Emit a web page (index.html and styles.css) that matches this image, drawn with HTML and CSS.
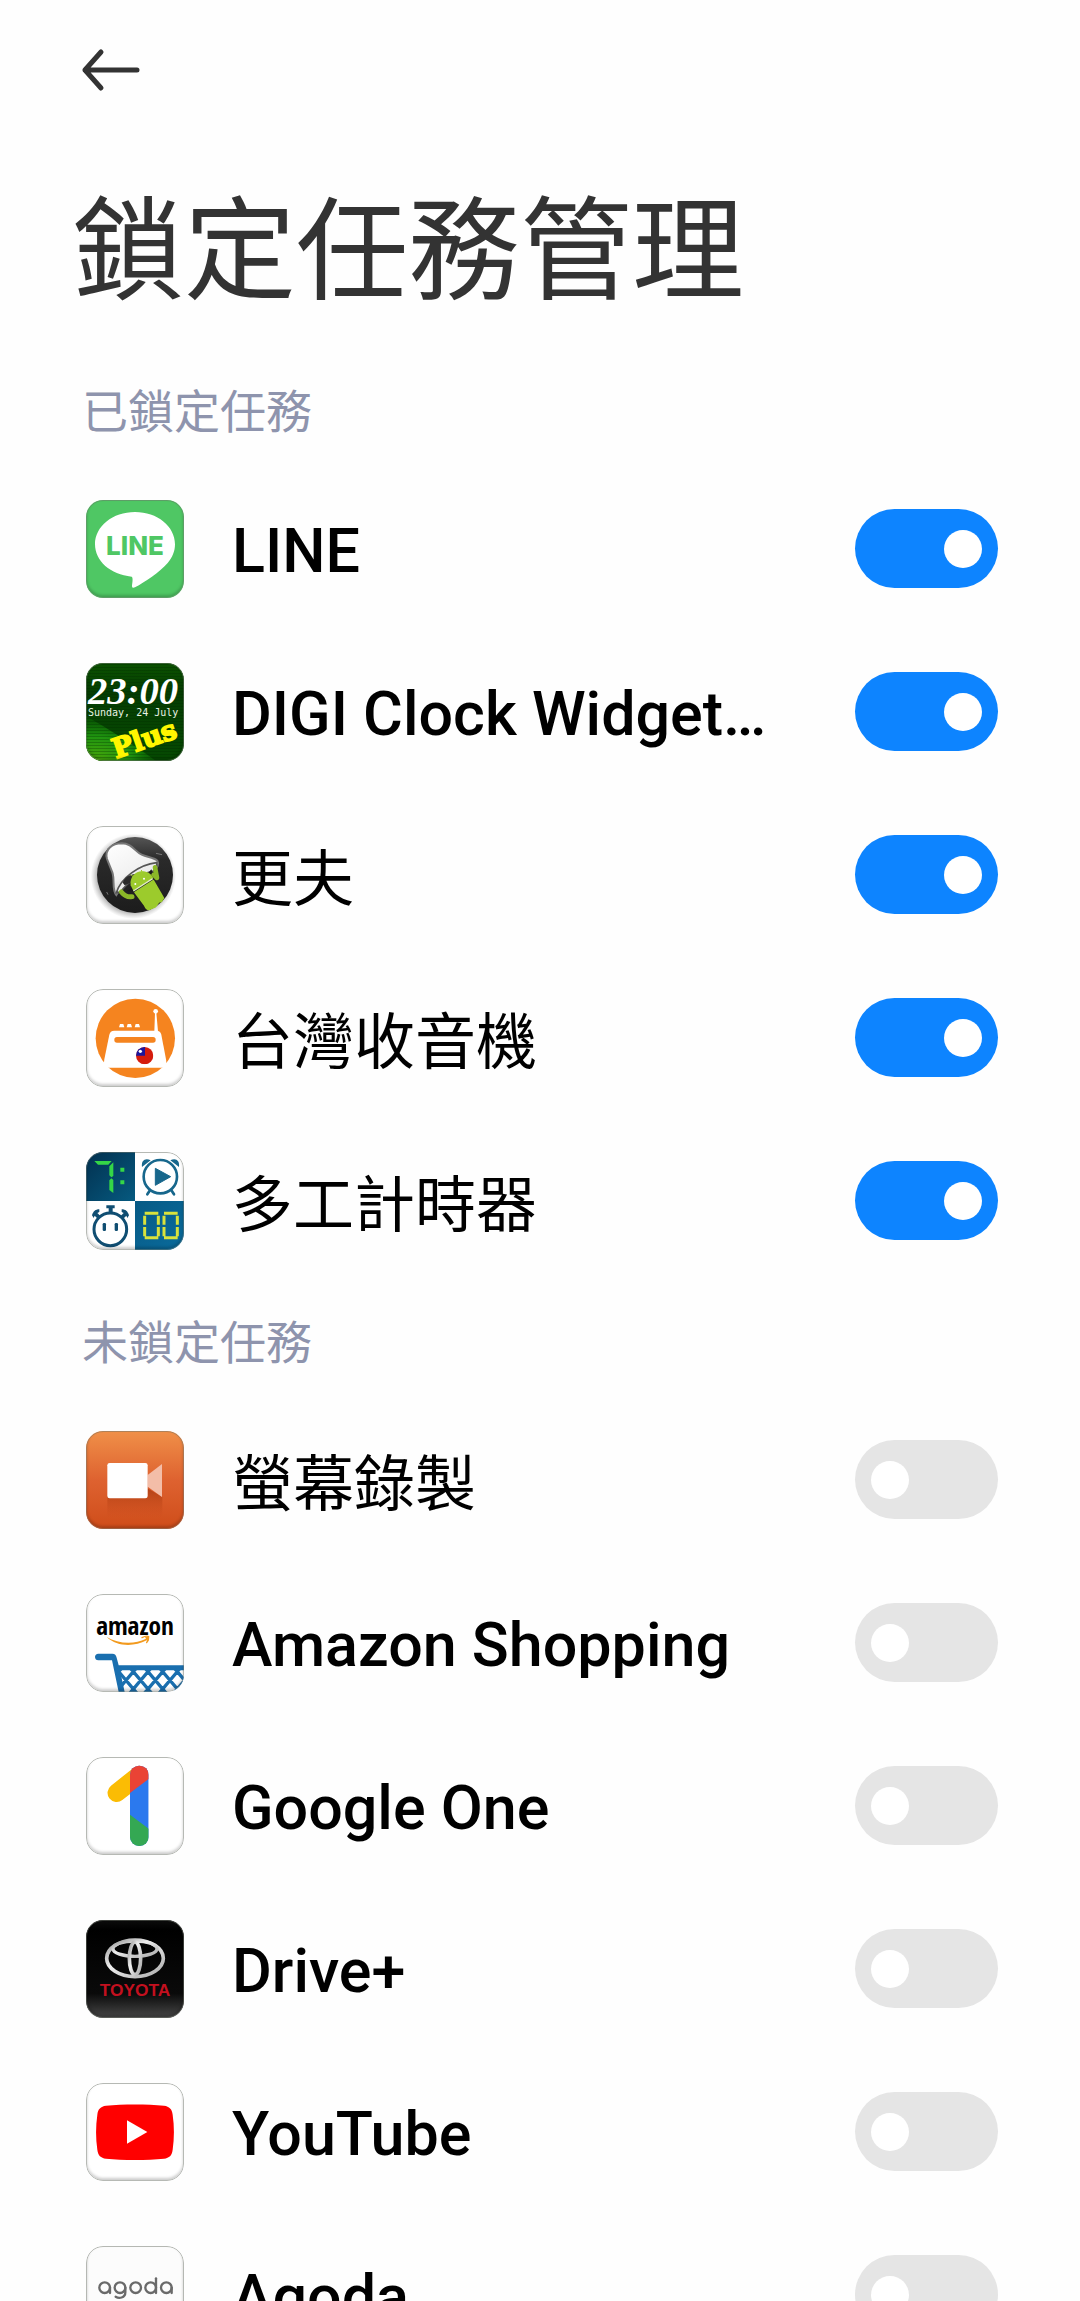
FILE: index.html
```html
<!DOCTYPE html>
<html lang="zh-Hant">
<head>
<meta charset="utf-8">
<meta name="viewport" content="width=device-width, initial-scale=1">
<title>鎖定任務管理</title>
<link rel="stylesheet" href="styles.css">
</head>
<body>
<div class="screen">
  <header class="header">
    <button class="back" type="button" aria-label="返回">
      <svg width="60" height="44" viewBox="0 0 60 44" fill="none" stroke="#333" stroke-width="5" stroke-linecap="round" stroke-linejoin="round"><path d="M57 22H5M21 4 5 22l16 18"/></svg>
    </button>
    <h1 class="title">鎖定任務管理</h1>
  </header>

  <main>
    <section>
      <h2 class="section-title">已鎖定任務</h2>
      <ul class="list">
        <li class="row">
          <span class="icon">
            <svg viewBox="48 57 294 294" aria-hidden="true">
              <rect x="48" y="57" width="294" height="294" fill="#4fc764"/>
              <path d="M195 93C128 93 75 136 75 190c0 50 46 91 110 97 5 3 2 18 1 28 0 5 3 7 9 4 30-16 73-45 98-73 15-18 22-36 22-56 0-54-53-97-120-97z" fill="#fff"/>
              <text x="195" y="221" class="logo-line" text-anchor="middle" fill="#4fc764">LINE</text>
            </svg>
          </span>
          <label class="label" for="t-line">LINE</label>
          <input class="switch" id="t-line" type="checkbox" role="switch" checked>
        </li>
        <li class="row">
          <span class="icon">
            <svg viewBox="48 546 294 294" aria-hidden="true">
              <defs>
                <linearGradient id="digi-bg" x1="0" y1="0" x2="0" y2="1"><stop offset="0" stop-color="#0b5200"/><stop offset=".3" stop-color="#053d02"/><stop offset="1" stop-color="#064a02"/></linearGradient>
                <radialGradient id="digi-glow" cx=".1" cy="1" r="1"><stop offset="0" stop-color="#4aa80a"/><stop offset=".55" stop-color="#1f9410"/><stop offset="1" stop-color="#0a6a02" stop-opacity=".3"/></radialGradient>
                <pattern id="digi-lines" width="8" height="9" patternUnits="userSpaceOnUse"><path d="M0 1h8" stroke="#002800" stroke-opacity=".35" stroke-width="3"/></pattern>
              </defs>
              <rect x="48" y="546" width="294" height="294" fill="url(#digi-bg)"/>
              <path d="M48 705c60 35 150 90 210 135H48z" fill="url(#digi-glow)"/>
              <rect x="48" y="546" width="294" height="294" fill="url(#digi-lines)"/>
              <text x="54" y="669" class="digi-time" fill="#fff">23:00</text>
              <text x="54" y="704" class="digi-date" fill="#e8f4e4">Sunday, 24 July</text>
              <text x="0" y="0" class="digi-plus" fill="#fff600" stroke="#fff600" stroke-width="5" transform="translate(138 833) rotate(-19)">Plus</text>
            </svg>
          </span>
          <label class="label" for="t-digi">DIGI Clock Widget…</label>
          <input class="switch" id="t-digi" type="checkbox" role="switch" checked>
        </li>
        <li class="row">
          <span class="icon">
            <svg viewBox="48 74 294 294" aria-hidden="true">
              <defs>
                <linearGradient id="bell-disc" x1="0" y1="0" x2="0" y2="1"><stop offset="0" stop-color="#555"/><stop offset=".3" stop-color="#2a2a2a"/><stop offset="1" stop-color="#1c1c1c"/></linearGradient>
                <linearGradient id="bell-body" x1="0" y1="0" x2=".6" y2="1"><stop offset="0" stop-color="#fff"/><stop offset=".6" stop-color="#f2f2f2"/><stop offset="1" stop-color="#bbb"/></linearGradient>
                <radialGradient id="bell-shade"><stop offset=".8" stop-color="#777" stop-opacity=".7"/><stop offset="1" stop-color="#999" stop-opacity="0"/></radialGradient>
              </defs>
              <rect x="48" y="74" width="294" height="294" fill="#fff"/>
              <circle cx="190" cy="225" r="128" fill="url(#bell-shade)"/>
              <circle cx="195" cy="221" r="114" fill="url(#bell-disc)"/>
              <path d="M139 281c-14-16-4-44-12-68l-16-40c-8-30 16-46 44-47 32 0 40 26 60 34 18 8 36 8 47 18 6 10 0 22-10 30-50 6-90 34-113 73z" fill="url(#bell-body)" stroke="#777" stroke-width="6"/>
              <path d="M139 274c14-44 68-84 121-90 2 12-4 22-12 26-38 8-76 32-96 62z" fill="#ededed" stroke="#555" stroke-width="5"/>
              <path d="M158 244c6-16 20-24 38-26l-4 22-28 12z" fill="#2b2b2b"/>
              <path d="M170 270l16-10 6 10zM232 218l12-14 6 14z" fill="#1c1c1c"/>
              <g fill="#9ccb2c">
                <path d="M182 252c-4-24 14-42 34-42 16 0 28 8 34 20l-60 38z"/>
                <path d="M195 273l55-35 30 52-6 10-8 2-10 14-18 8c-8 0-10-4-14-12z" stroke="#9ccb2c" stroke-width="5" stroke-linejoin="round"/>
                <path d="M255 198l6 32-10-10" fill="none" stroke="#8bb828" stroke-width="14" stroke-linecap="round" stroke-linejoin="round"/>
                <path d="M154 272c10 12 22 16 32 14" fill="none" stroke="#8bb828" stroke-width="15" stroke-linecap="round"/>
                <path d="M192 228l-10-8M218 220l-4-14" stroke="#9ccb2c" stroke-width="3"/>
              </g>
              <path d="M190 269l58-37" stroke="#e4f2c4" stroke-width="4"/>
              <circle cx="196" cy="248" r="3" fill="#fff"/><circle cx="222" cy="232" r="3" fill="#fff"/>
              <path d="M258 156l18 4M110 272l4 8" stroke="#777" stroke-width="3"/>
            </svg>
          </span>
          <label class="label label-cjk" for="t-gengfu">更夫</label>
          <input class="switch" id="t-gengfu" type="checkbox" role="switch" checked>
        </li>
        <li class="row">
          <span class="icon">
            <svg viewBox="48 563 294 294" aria-hidden="true">
              <defs><clipPath id="flag"><circle cx="224" cy="763" r="26"/></clipPath></defs>
              <rect x="48" y="563" width="294" height="294" fill="#fff"/>
              <circle cx="196" cy="711" r="119" fill="#f5841f"/>
              <path d="M133 688h126c9 0 13 4 15 12l14 74c3 16-2 25-14 25H116c-12 0-16-8-13-25l15-74c2-8 6-12 15-12z" fill="#fff"/>
              <rect x="133" y="707" width="124" height="17" rx="8" fill="#f5841f"/>
              <path d="M147 678l3-10h10l3 10zM170 678l3-10h10l3 10zM194 678l3-10h10l3 10zM253 690l2-56h4l5 56z" fill="#fff"/>
              <circle cx="257" cy="630" r="7" fill="#fff"/>
              <g clip-path="url(#flag)"><path d="M198 737h52v52h-52z" fill="#d51c0c"/><path d="M198 737h27v26h-27z" fill="#1c169c"/></g>
              <circle cx="211" cy="750" r="5" fill="#fff"/>
            </svg>
          </span>
          <label class="label label-cjk" for="t-radio">台灣收音機</label>
          <input class="switch" id="t-radio" type="checkbox" role="switch" checked>
        </li>
        <li class="row">
          <span class="icon">
            <svg viewBox="48 63 294 294" aria-hidden="true">
              <defs>
                <linearGradient id="multi-a" x1="0" y1="0" x2="1" y2="1"><stop offset="0" stop-color="#02304f"/><stop offset="1" stop-color="#065a80"/></linearGradient>
                <linearGradient id="multi-b" x1="0" y1="0" x2="1" y2="1"><stop offset="0" stop-color="#075a85"/><stop offset="1" stop-color="#0a6b9c"/></linearGradient>
              </defs>
              <rect x="48" y="63" width="294" height="294" fill="#fff"/>
              <rect x="48" y="63" width="147" height="147" fill="url(#multi-a)"/>
              <rect x="195" y="210" width="147" height="147" fill="url(#multi-b)"/>
              <path d="M73 90h52l-10 11H84zM130 94v41l-6 4-6-6v-27zM124 142l6 5v39l-12-9v-29zM151 110h12v12h-12zM151 148h12v12h-12z" fill="#35d647"/>
              <g fill="none" stroke="#17678c" stroke-width="8" stroke-linecap="round">
                <circle cx="271" cy="137" r="50"/>
                <path d="M239 179l-7 11M305 179l7 11"/>
              </g>
              <path d="M256 112l46 25-46 26z" fill="#17678c" stroke="#17678c" stroke-width="3" stroke-linejoin="round"/>
              <path d="M216 108c-3-20 10-28 26-20zM327 108c3-20-10-28-26-20z" fill="#17678c"/>
              <circle cx="121" cy="295" r="49" fill="none" stroke="#104e72" stroke-width="9"/>
              <path d="M109 223h25v9h-6v16h-12v-16h-7zM66 253c4-12 10-18 22-18v8l-6 3 10 10-8 8-10-10-3 7zM177 253c-4-12-10-18-22-18v8l6 3-10 10 8 8 10-10 3 7z" fill="#104e72"/>
              <rect x="98" y="276" width="10" height="24" rx="4" fill="#104e72"/>
              <rect x="134" y="276" width="10" height="24" rx="4" fill="#104e72"/>
              <path d="M224 247h41M224 320h41M224 254v27M224 288v28M265 254v27M265 288v28M282 247h41M282 320h41M282 254v27M282 288v28M322 254v27M322 288v28" fill="none" stroke="#d9e23c" stroke-width="9"/>
            </svg>
          </span>
          <label class="label label-cjk" for="t-multi">多工計時器</label>
          <input class="switch" id="t-multi" type="checkbox" role="switch" checked>
        </li>
      </ul>
    </section>

    <section>
      <h2 class="section-title">未鎖定任務</h2>
      <ul class="list">
        <li class="row">
          <span class="icon">
            <svg viewBox="48 59 294 294" aria-hidden="true">
              <defs>
                <linearGradient id="rec-bg" x1="0" y1="0" x2="0" y2="1"><stop offset="0" stop-color="#f09048"/><stop offset=".5" stop-color="#de6230"/><stop offset="1" stop-color="#cf4d1a"/></linearGradient>
                <linearGradient id="rec-shade" x1="0" y1="0" x2="0" y2="1"><stop offset="0" stop-color="#a83a10" stop-opacity=".8"/><stop offset="1" stop-color="#c84a1a" stop-opacity="0"/></linearGradient>
              </defs>
              <rect x="48" y="59" width="294" height="294" fill="url(#rec-bg)"/>
              <path d="M112 255h120v-24l45 26v65H112z" fill="url(#rec-shade)"/>
              <path d="M233 191l43-33v99l-43-31z" fill="#f3bda8"/>
              <rect x="112" y="155" width="121" height="106" rx="7" fill="#fff"/>
            </svg>
          </span>
          <label class="label label-cjk" for="t-rec">螢幕錄製</label>
          <input class="switch" id="t-rec" type="checkbox" role="switch">
        </li>
        <li class="row">
          <span class="icon">
            <svg viewBox="48 549 294 294" aria-hidden="true">
              <defs><clipPath id="basket"><path d="M140 765h202v78H154z"/></clipPath></defs>
              <rect x="48" y="549" width="294" height="294" fill="#fff"/>
              <text x="195" y="671" class="logo-amazon" text-anchor="middle" fill="#000">amazon</text>
              <path d="M110 678c34 20 82 24 118 5l-3-4 12-3-3 18-4-6c-38 20-88 20-120-10z" fill="#f29a1e"/>
              <path d="M216 680c10-5 17-5 20-3 1 5-1 11-6 18" fill="none" stroke="#f29a1e" stroke-width="4" stroke-linecap="round"/>
              <path d="M75 738c0-6 4-10 10-10h42c8 0 11 4 13 12l6 23h196v15H150l14 65h-18l-20-95H85c-6 0-10-4-10-10z" fill="#1a6faf"/>
              <path clip-path="url(#basket)" fill="none" stroke="#1a6faf" stroke-width="10" d="M80 756l88 104M124 756l88 104M168 756l88 104M212 756l88 104M256 756l88 104M300 756l88 104M168 756l-88 104M212 756l-88 104M256 756l-88 104M300 756l-88 104M344 756l-88 104M388 756l-88 104"/>
            </svg>
          </span>
          <label class="label" for="t-amazon">Amazon Shopping</label>
          <input class="switch" id="t-amazon" type="checkbox" role="switch">
        </li>
        <li class="row">
          <span class="icon">
            <svg viewBox="48 48 294 294" aria-hidden="true">
              <defs>
                <clipPath id="one-stem"><rect x="180" y="74" width="56" height="241" rx="27"/></clipPath>
              </defs>
              <rect x="48" y="48" width="294" height="294" fill="#fff"/>
              <path d="M189 82 123 134a27 27 0 0 0 34 43l40-31z" fill="#fbbc04"/>
              <g clip-path="url(#one-stem)">
                <path d="M180 70h56v250h-56z" fill="#2b79ee"/>
                <path d="M180 70h56v44l-56 42z" fill="#ea4335"/>
                <path d="M180 221l56 42v57h-56z" fill="#34a853"/>
              </g>
            </svg>
          </span>
          <label class="label" for="t-one">Google One</label>
          <input class="switch" id="t-one" type="checkbox" role="switch">
        </li>
        <li class="row">
          <span class="icon">
            <svg viewBox="48 537 294 294" aria-hidden="true">
              <defs>
                <linearGradient id="toy-bg" x1="0" y1="0" x2="0" y2="1"><stop offset="0" stop-color="#0c0c0c"/><stop offset=".1" stop-color="#000"/><stop offset=".75" stop-color="#0a0a0a"/><stop offset="1" stop-color="#484848"/></linearGradient>
                <linearGradient id="toy-ring" x1="0" y1="0" x2="1" y2="1"><stop offset="0" stop-color="#999"/><stop offset=".4" stop-color="#eee"/><stop offset="1" stop-color="#aaa"/></linearGradient>
              </defs>
              <rect x="48" y="537" width="294" height="294" fill="url(#toy-bg)"/>
              <g fill="none" stroke="url(#toy-ring)">
                <ellipse cx="195" cy="652" rx="85" ry="55" stroke-width="11"/>
                <ellipse cx="195" cy="623" rx="66" ry="23" stroke-width="10"/>
                <ellipse cx="195" cy="652" rx="17" ry="49" stroke-width="11"/>
              </g>
              <text x="195" y="766" class="logo-toyota" text-anchor="middle" fill="#c3101f">TOYOTA</text>
            </svg>
          </span>
          <label class="label" for="t-drive">Drive+</label>
          <input class="switch" id="t-drive" type="checkbox" role="switch">
        </li>
        <li class="row">
          <span class="icon">
            <svg viewBox="48 66 294 294" aria-hidden="true">
              <rect x="48" y="66" width="294" height="294" fill="#fff"/>
              <path d="M108 134c50-5 124-5 174 0 16 2 24 10 26 27 5 34 5 71 0 105-2 17-10 25-26 27-50 5-124 5-174 0-16-2-24-10-26-27-5-34-5-71 0-105 2-17 10-25 26-27z" fill="#f00"/>
              <path d="M171 178l61 35-61 35z" fill="#fff"/>
            </svg>
          </span>
          <label class="label" for="t-youtube">YouTube</label>
          <input class="switch" id="t-youtube" type="checkbox" role="switch">
        </li>
        <li class="row">
          <span class="icon">
            <svg viewBox="48 555 294 294" aria-hidden="true">
              <rect x="48" y="555" width="294" height="294" fill="#fcfcfc"/>
              <g fill="none" stroke="#6a6a6a" stroke-width="7" stroke-linecap="round">
                <circle cx="104" cy="680" r="16"/><path d="M120 680v16"/>
                <circle cx="150" cy="680" r="16"/><path d="M166 680v14c0 18-20 19-29 13"/>
                <circle cx="197" cy="680" r="16"/>
                <circle cx="242" cy="680" r="16"/><path d="M258 696v-44"/>
                <circle cx="289" cy="680" r="16"/><path d="M305 680v16"/>
              </g>
            </svg>
          </span>
          <label class="label" for="t-agoda">Agoda</label>
          <input class="switch" id="t-agoda" type="checkbox" role="switch">
        </li>
      </ul>
    </section>
  </main>
</div>
</body>
</html>
```
FILE: styles.css
```css
* {
  box-sizing: border-box;
}

body {
  margin: 0;
  background: #fefefe;
  color: #000;
  font-family: Roboto, "Noto Sans CJK TC", sans-serif;
}

.screen {
  height: 100vh;
  overflow-y: auto;
  scrollbar-width: none;
}

.header {
  padding: 48px 72px 0;
}

.back {
  display: flex;
  margin: 0;
  padding: 0 8px;
  border: 0;
  background: none;
  cursor: pointer;
}

.title {
  margin: 79px 0 16px;
  color: #333;
  font-size: 112px;
  font-weight: 400;
  line-height: 164px;
}

.section-title {
  margin: 0;
  padding: 28px 82px 21px;
  color: #8e94ad;
  font-size: 46px;
  font-weight: 400;
  line-height: 67px;
}

.list {
  margin: 0;
  padding: 0;
  list-style: none;
}

.row {
  display: flex;
  align-items: center;
  gap: 48px;
  height: 163px;
  padding: 0 82px 0 86px;
}

.icon {
  position: relative;
  flex: none;
  width: 98px;
  height: 98px;
  border-radius: 17px;
  overflow: hidden;
}

.icon svg {
  display: block;
  width: 100%;
  height: 100%;
}

/* bevelled rim drawn over the artwork */
.icon::after {
  content: "";
  position: absolute;
  inset: 0;
  border: 1px solid rgba(110, 115, 105, 0.5);
  border-radius: 17px;
  box-shadow: inset 0 -2px 3px rgba(0, 0, 0, 0.2);
}

.label {
  flex: 1;
  min-width: 0;
  padding-top: 4px;
  overflow: hidden;
  font-size: 61px;
  font-weight: 500;
  line-height: 88px;
  text-overflow: ellipsis;
  white-space: nowrap;
}

.label-cjk {
  padding-top: 10px;
  font-weight: 400;
}

.switch {
  appearance: none;
  flex: none;
  display: flex;
  align-items: center;
  width: 143px;
  height: 79px;
  margin: 0;
  padding: 0 16px;
  border-radius: 40px;
  background: #e5e5e5;
  cursor: pointer;
}

.switch::before {
  content: "";
  width: 38px;
  height: 38px;
  border-radius: 50%;
  background: #fff;
}

.switch:checked {
  justify-content: flex-end;
  background: #0d84ff;
}

.logo-line {
  font: 800 78px Inter, sans-serif;
}

.logo-amazon {
  font: 700 76px "Liberation Sans Narrow", "Open Sans Condensed", sans-serif;
}

.logo-toyota {
  font: 700 52px "Liberation Sans", sans-serif;
}

.digi-time {
  font: italic 700 116px "Liberation Serif", serif;
}

.digi-date {
  font: 30px "DejaVu Sans Mono", monospace;
}

.digi-plus {
  font: 700 82px "DejaVu Serif", serif;
}
```
